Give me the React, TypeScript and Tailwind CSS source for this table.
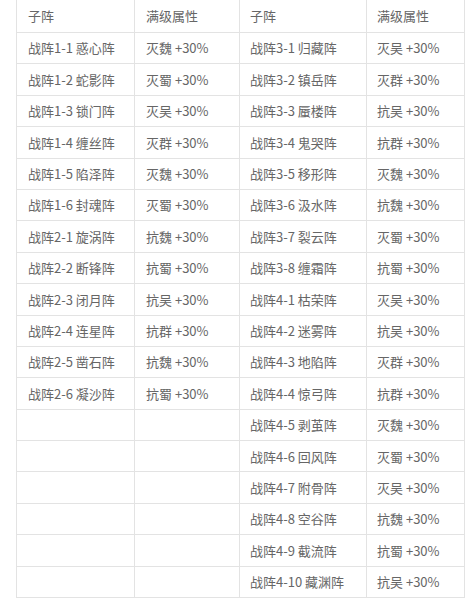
import React from 'react';

const left: [string, string][] = [
  ['战阵1-1 惑心阵', '灭魏 +30%'],
  ['战阵1-2 蛇影阵', '灭蜀 +30%'],
  ['战阵1-3 锁门阵', '灭吴 +30%'],
  ['战阵1-4 缠丝阵', '灭群 +30%'],
  ['战阵1-5 陷泽阵', '灭魏 +30%'],
  ['战阵1-6 封魂阵', '灭蜀 +30%'],
  ['战阵2-1 旋涡阵', '抗魏 +30%'],
  ['战阵2-2 断锋阵', '抗蜀 +30%'],
  ['战阵2-3 闭月阵', '抗吴 +30%'],
  ['战阵2-4 连星阵', '抗群 +30%'],
  ['战阵2-5 凿石阵', '抗魏 +30%'],
  ['战阵2-6 凝沙阵', '抗蜀 +30%'],
];

const right: [string, string][] = [
  ['战阵3-1 归藏阵', '灭吴 +30%'],
  ['战阵3-2 镇岳阵', '灭群 +30%'],
  ['战阵3-3 蜃楼阵', '抗吴 +30%'],
  ['战阵3-4 鬼哭阵', '抗群 +30%'],
  ['战阵3-5 移形阵', '灭魏 +30%'],
  ['战阵3-6 汲水阵', '抗魏 +30%'],
  ['战阵3-7 裂云阵', '灭蜀 +30%'],
  ['战阵3-8 缠霜阵', '抗蜀 +30%'],
  ['战阵4-1 枯荣阵', '灭吴 +30%'],
  ['战阵4-2 迷雾阵', '抗吴 +30%'],
  ['战阵4-3 地陷阵', '灭群 +30%'],
  ['战阵4-4 惊弓阵', '抗群 +30%'],
  ['战阵4-5 剥茧阵', '灭魏 +30%'],
  ['战阵4-6 回风阵', '灭蜀 +30%'],
  ['战阵4-7 附骨阵', '灭吴 +30%'],
  ['战阵4-8 空谷阵', '抗魏 +30%'],
  ['战阵4-9 截流阵', '抗蜀 +30%'],
  ['战阵4-10 藏渊阵', '抗吴 +30%'],
];

export default function App() {
  const cell = 'border border-[#e3e3e3] pl-[11px] whitespace-nowrap';
  return (
    <div
      className="min-h-screen bg-white pl-4 text-[13px] text-[#666]"
      style={{ fontFamily: '"Noto Sans CJK SC", "Noto Sans", sans-serif' }}
    >
      <table className="-mt-px w-[448px] table-fixed border-collapse">
        <colgroup>
          <col className="w-[118px]" />
          <col className="w-[105px]" />
          <col className="w-[127px]" />
          <col className="w-[98px]" />
        </colgroup>
        <thead>
          <tr className="h-[33px]">
            <td className={cell}>子阵</td>
            <td className={cell}>满级属性</td>
            <td className={`${cell} !pl-[10px]`}>子阵</td>
            <td className={`${cell} !pl-[10px]`}>满级属性</td>
          </tr>
        </thead>
        <tbody>
          {right.map((r, i) => (
            <tr key={i} className="h-[31.4px]">
              <td className={cell}>{left[i]?.[0] ?? ''}</td>
              <td className={cell}>{left[i]?.[1] ?? ''}</td>
              <td className={`${cell} !pl-[10px]`}>{r[0]}</td>
              <td className={`${cell} !pl-[10px]`}>{r[1]}</td>
            </tr>
          ))}
        </tbody>
      </table>
    </div>
  );
}
